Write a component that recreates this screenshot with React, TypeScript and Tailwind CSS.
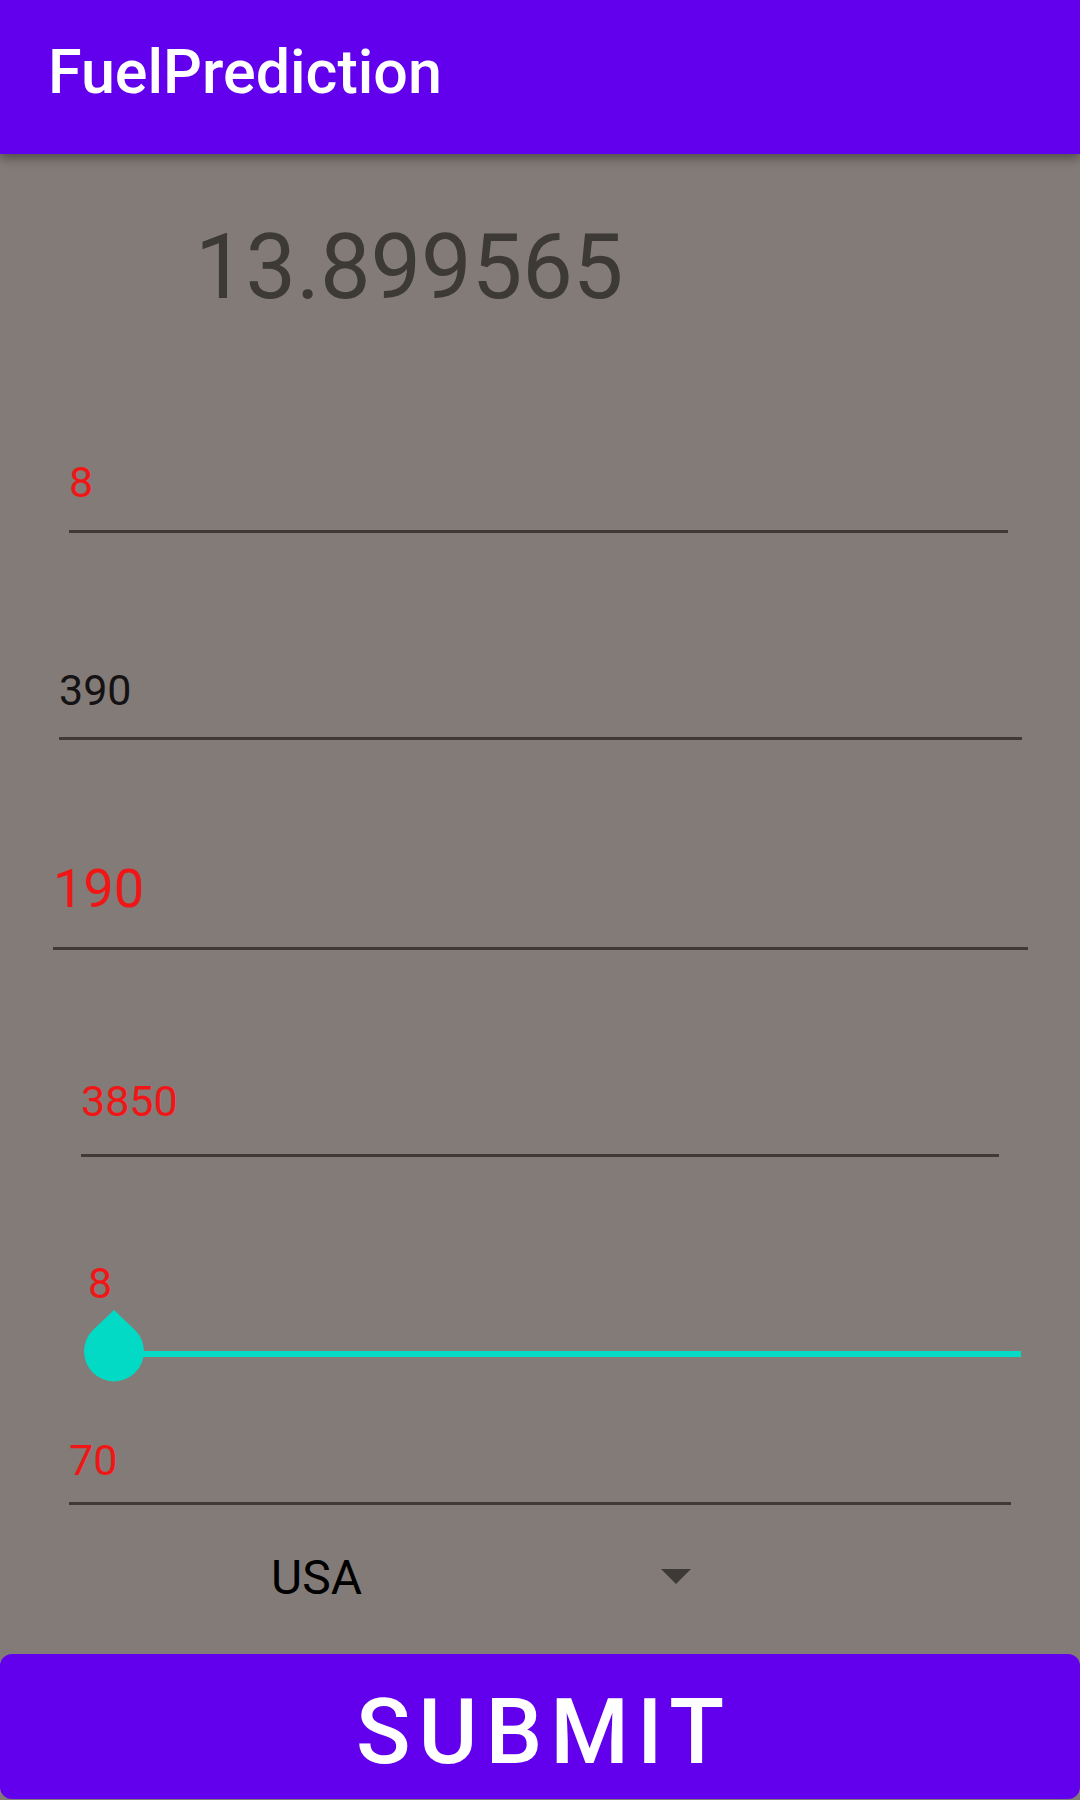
import { useState } from "react";

type FieldProps = {
  label: string;
  initial: string;
  className: string;
};

function Field({ label, initial, className }: FieldProps) {
  const [value, setValue] = useState(initial);
  return (
    <div className={`flex ${className}`}>
      <input
        type="text"
        inputMode="numeric"
        aria-label={label}
        value={value}
        onChange={(e) => setValue(e.target.value)}
        className="w-full min-w-0 border-b-3 border-[#403a37] bg-transparent p-0 outline-none"
      />
    </div>
  );
}

export default function App() {
  const [cylinders, setCylinders] = useState(8);
  return (
    <div className="flex min-h-screen flex-col bg-[#837b78] font-['Roboto',sans-serif] text-[43px] text-[#f01616]">
      <header className="flex h-[154px] items-center bg-[#6200ee] px-12 pb-2.5 shadow-[0_4px_10px_rgba(0,0,0,0.4)]">
        <h1 className="text-[61px] leading-[72px] font-medium text-white">FuelPrediction</h1>
      </header>

      <form className="flex grow flex-col" onSubmit={(e) => e.preventDefault()}>
        <output className="mt-[61px] ml-[195px] text-[90px] leading-[106px] text-[#3d3936]">
          13.899565
        </output>

        <Field label="Cylinders" initial="8" className="mt-[113px] mr-[72px] ml-[69px] h-[99px]" />
        <Field
          label="Displacement"
          initial="390"
          className="mt-[110px] mr-[58px] ml-[59px] h-[97px] text-[#141212]"
        />
        <Field
          label="Horsepower"
          initial="190"
          className="mt-[89px] mr-[52px] ml-[53px] h-[121px] text-[54px]"
        />
        <Field label="Weight" initial="3850" className="mt-[98px] mr-[81px] ml-[81px] h-[109px]" />

        <label htmlFor="acceleration" className="mt-[102px] ml-[88px] leading-[48px]">
          {cylinders}
        </label>
        <div className="mt-[2px] mr-[29px] ml-[84px] flex">
          <input
            id="acceleration"
            type="range"
            min={8}
            max={25}
            value={cylinders}
            onChange={(e) => setCylinders(Number(e.target.value))}
            className="h-[73px] w-full appearance-none bg-transparent bg-[linear-gradient(#05dac6,#05dac6)] bg-[length:calc(100%-60px)_6px] bg-[position:30px_42px] bg-no-repeat outline-none [&::-webkit-slider-thumb]:h-[73px] [&::-webkit-slider-thumb]:w-[60px] [&::-webkit-slider-thumb]:appearance-none [&::-webkit-slider-thumb]:bg-[#03dac6] [&::-webkit-slider-thumb]:[clip-path:path('M30_1L51_21A30_30_0_1_1_9_21Z')]"
          />
        </div>

        <Field label="Model year" initial="70" className="mt-9 mr-[69px] ml-[69px] h-[87px]" />

        <div className="relative mt-[43px] ml-[25%] flex w-2/5">
          <select
            aria-label="Origin"
            defaultValue="USA"
            className="h-[60px] w-full appearance-none bg-transparent p-0 pl-px text-[48px] leading-[60px] text-black outline-none"
          >
            <option>USA</option>
            <option>Europe</option>
            <option>Japan</option>
          </select>
          <svg
            viewBox="0 0 30 15"
            aria-hidden="true"
            className="pointer-events-none absolute top-[21px] right-[11px] h-[15px] w-[30px] fill-[#3d3936]"
          >
            <path d="M0 0H30L15 15Z" />
          </svg>
        </div>

        <button
          type="submit"
          className="mt-[46px] mb-px h-[145px] rounded-xl bg-[#6200ee] pt-3 pl-2 text-[90px] leading-[106px] font-medium tracking-[8px] text-white"
        >
          SUBMIT
        </button>
      </form>
    </div>
  );
}
